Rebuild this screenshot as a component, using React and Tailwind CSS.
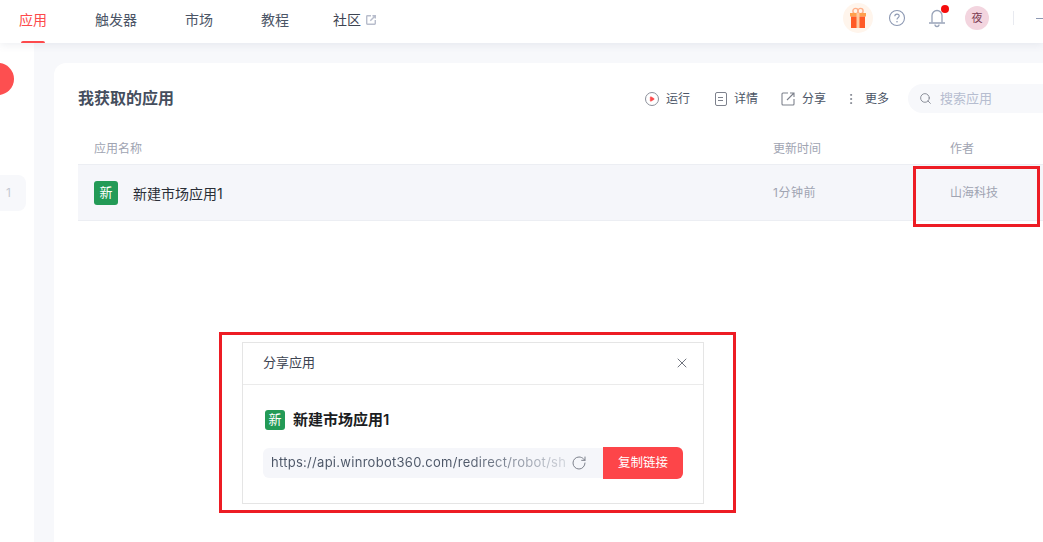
import { Play, MoreVertical, Search, X, RotateCw } from "lucide-react";

const font = "font-['Inter','Noto_Sans_CJK_SC',sans-serif]";

const tabs = [
  { label: "应用", active: true },
  { label: "触发器" },
  { label: "市场" },
  { label: "教程" },
];

function GreenIcon({ className }) {
  return (
    <div className={`flex shrink-0 items-center justify-center rounded-[3px] bg-[#239a56] text-white ${className}`}>新</div>
  );
}

function GiftIcon() {
  return (
    <svg width="18" height="22" viewBox="0 0 18 22">
      <circle cx="6.5" cy="4" r="2.6" fill="none" stroke="#ffb08a" strokeWidth="1.4" />
      <circle cx="11.5" cy="4" r="2.6" fill="none" stroke="#ffb08a" strokeWidth="1.4" />
      <rect x="1" y="6" width="16" height="3.5" fill="#ffa04d" />
      <rect x="2" y="9.5" width="14" height="11.5" fill="#ff5a26" />
      <rect x="7.5" y="6" width="3" height="15" fill="#ffc9a0" />
    </svg>
  );
}

function HelpIcon() {
  return (
    <svg width="18" height="18" viewBox="0 0 18 18" fill="none">
      <circle cx="9" cy="9" r="7.5" stroke="#8d99b3" strokeWidth="1.1" />
      <path d="M6.8 7.2c0-1.3 1-2.1 2.2-2.1s2.2.8 2.2 2c0 1.7-2.2 1.7-2.2 3.3" stroke="#8d99b3" strokeWidth="1.1" />
      <circle cx="9" cy="12.8" r=".8" fill="#8d99b3" />
    </svg>
  );
}

function BellIcon() {
  return (
    <svg width="18" height="20" viewBox="0 0 18 20" fill="none">
      <path d="M4 14.5V7.5a5 5 0 0 1 10 0v7" stroke="#98a3b8" strokeWidth="1.3" />
      <path d="M1 15h16" stroke="#98a3b8" strokeWidth="1.5" />
      <path d="M7 16.5a2 2 0 0 0 4 0" stroke="#98a3b8" strokeWidth="1.3" />
    </svg>
  );
}

// box with an open corner and an arrow leaving it
function ShareIcon({ size, color, width }) {
  return (
    <svg width={size} height={size} viewBox="0 0 14 14" fill="none" stroke={color} strokeWidth={width}>
      <path d="M7 1H2a1 1 0 0 0-1 1v10a1 1 0 0 0 1 1h10a1 1 0 0 0 1-1V7" />
      <path d="M6 8l7-7M9 1h4v4" />
    </svg>
  );
}

function ToolButton({ icon, label }) {
  return (
    <div className="flex items-center gap-[7px] text-[12px] text-[#4b5566]">
      {icon}
      <span>{label}</span>
    </div>
  );
}

export default function App() {
  return (
    <div className={`relative flex h-[542px] w-[1043px] flex-col overflow-hidden bg-white ${font}`}>
      {/* top nav */}
      <header className="relative z-10 flex h-[43px] shrink-0 items-center bg-white pl-[19px] shadow-[0_2px_8px_rgba(90,100,130,0.1)]">
        <nav className="flex h-full items-center gap-12 text-[14px] text-[#4b5566]">
          {tabs.map((t) => (
            <div key={t.label} className={`relative flex h-full items-center pb-[4px] ${t.active ? "text-[#fd4a4c]" : ""}`}>
              {t.label}
              {t.active && <span className="absolute bottom-0 left-[2px] h-[2px] w-[24px] rounded-t bg-[#fd4a4c]" />}
            </div>
          ))}
          <div className="-ml-1 flex h-full items-center gap-[5px] pb-[4px] text-[#3d4452]">
            社区
            <ShareIcon size={10} color="#b8bdcc" width={2} />
          </div>
        </nav>
        <div className="ml-auto flex h-full items-center pb-[7px]">
          <div className="flex h-[30px] w-[30px] items-center justify-center rounded-full bg-[#fff5ec]">
            <GiftIcon />
          </div>
          <div className="ml-[15px]"><HelpIcon /></div>
          <div className="relative ml-[22px]">
            <BellIcon />
            <span className="absolute -right-[3px] -top-[3px] h-2 w-2 rounded-full bg-[#f50c0c]" />
          </div>
          <div className="ml-[19px] flex h-6 w-6 items-center justify-center rounded-full bg-[#f3d5df] text-[11px] text-[#7b3b52]">夜</div>
          <div className="ml-[24px] h-[14px] w-px bg-[#e8eaf0]" />
          <div className="ml-[22px] h-px w-[7px] bg-[#8d99b3]" />
        </div>
      </header>

      <div className="flex min-h-0 flex-1">
        {/* collapsed sidebar */}
        <aside className="flex w-[34px] shrink-0 flex-col bg-white pt-[20px]">
          <div className="-ml-[18px] h-8 w-8 rounded-full bg-[#fd4f50]" />
          <div className="mt-[80px] flex h-9 w-[26px] items-center rounded-r-lg bg-[#f7f8fb] pl-[6px] text-[12px] text-[#c4c8d2]">1</div>
        </aside>

        {/* main */}
        <main className="min-w-0 flex-1 bg-[#f7f8fb] pl-5 pt-5">
          <div className="h-full overflow-hidden rounded-tl-xl bg-white pl-6">
            <div className="flex h-[67px] items-center pt-[3px]">
              <h1 className="text-[16px] font-semibold text-[#454e5e]">我获取的应用</h1>
              <div className="ml-auto flex items-center pt-[1px]">
                <ToolButton
                  label="运行"
                  icon={
                    <span className="relative flex h-[14px] w-[14px] items-center justify-center rounded-full border border-[#8b8f9a]">
                      <Play size={6} fill="#fd4a4c" color="#fd4a4c" />
                    </span>
                  }
                />
                <div className="ml-[25px]">
                  <ToolButton
                    label="详情"
                    icon={
                      <span className="flex h-[14px] w-[12px] flex-col items-center justify-center gap-[2px] rounded-[2px] border border-[#7d818c]">
                        <span className="h-px w-[5px] bg-[#7d818c]" />
                        <span className="h-px w-[5px] bg-[#7d818c]" />
                      </span>
                    }
                  />
                </div>
                <div className="ml-[23px]">
                  <ToolButton label="分享" icon={<ShareIcon size={14} color="#7d818c" width={1.1} />} />
                </div>
                <div className="ml-[18px]">
                  <ToolButton label="更多" icon={<MoreVertical size={14} color="#7d818c" strokeWidth={1.6} />} />
                </div>
                <div className="ml-[19px] flex h-[29px] w-[135px] items-center gap-[8px] rounded-l-full bg-[#f7f8fb] pl-[11px] text-[13px] text-[#b6bdd0]">
                  <Search size={13} color="#7d818c" strokeWidth={1.6} />
                  搜索应用
                </div>
              </div>
            </div>

            {/* table */}
            <div className="flex h-[35px] items-center border-b border-[#eceef3] pt-[4px] text-[12px] text-[#a0a4b2]">
              <div className="w-[695px] pl-4">应用名称</div>
              <div className="w-[177px]">更新时间</div>
              <div>作者</div>
            </div>
            <div className="flex h-[56px] items-center border-b border-[#eceef3] bg-[#f5f6fa] pt-[1px] text-[12px] text-[#a0a4b2]">
              <div className="flex w-[695px] items-center gap-[15px] pl-4 text-[14px] text-[#2a2e37]">
                <GreenIcon className="h-6 w-6 text-[13px]" />
                新建市场应用1
              </div>
              <div className="w-[177px] tracking-[0.5px]">1分钟前</div>
              <div>山海科技</div>
            </div>
          </div>
        </main>
      </div>

      {/* annotation: author cell */}
      <div className="absolute left-[913px] top-[166px] h-[61px] w-[127px] border-[3px] border-[#ed1c24]" />

      {/* annotation: share dialog */}
      <div className="absolute left-[219px] top-[332px] flex h-[181px] w-[517px] items-center border-[3px] border-[#ed1c24] bg-white pl-5">
        <div className="flex h-[162px] w-[462px] flex-col border border-[#e5e5e5] bg-white">
          <div className="flex h-[42px] shrink-0 items-center justify-between border-b border-[#ebebeb] pl-5 pr-[13px] text-[13px] text-[#3d4452]">
            分享应用
            <X size={16} color="#5a5f6b" strokeWidth={1.3} />
          </div>
          <div className="flex flex-1 flex-col px-5 pt-[24px]">
            <div className="ml-[2px] flex items-center gap-2 text-[15px] font-semibold text-[#1b1d22]">
              <GreenIcon className="h-5 w-5 text-[13px] font-normal" />
              新建市场应用1
            </div>
            <div className="mt-[16px] flex h-8 items-center">
              <div className="flex h-[30px] w-[340px] items-center overflow-hidden rounded-l-md bg-[#f5f6fa]">
                <span className="w-[307px] whitespace-nowrap bg-gradient-to-r from-[#4b5566] from-65% to-[#d8dbe2] bg-clip-text pl-2 text-[13px] tracking-[0.28px] text-transparent">
                  https://api.winrobot360.com/redirect/robot/sh
                </span>
                <RotateCw size={16} color="#7d818c" strokeWidth={1.5} className="ml-[1px]" />
              </div>
              <div className="flex h-8 w-20 items-center justify-center rounded-r-md bg-[#fd4549] text-[12.5px] text-white">复制链接</div>
            </div>
          </div>
        </div>
      </div>
    </div>
  );
}
